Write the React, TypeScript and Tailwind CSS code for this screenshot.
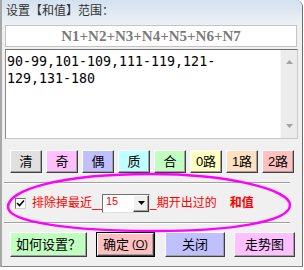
import React from 'react';

const ui = "font-['Liberation_Sans','Noto_Sans_CJK_SC',sans-serif]";

const bevel =
  'border border-t-white border-l-white border-b-[#404040] border-r-[#404040] shadow-[inset_-1px_-1px_0_#a0a0a0]';

const filterButtons = [
  { label: '清', bg: 'bg-[#e0e0e0]' },
  { label: '奇', bg: 'bg-[#ffc0ff]' },
  { label: '偶', bg: 'bg-[#c0c0ff]' },
  { label: '质', bg: 'bg-[#c0ffff]' },
  { label: '合', bg: 'bg-[#c0ffc0]' },
  { label: '0路', bg: 'bg-[#ffffc0]' },
  { label: '1路', bg: 'bg-[#ffe0c0]' },
  { label: '2路', bg: 'bg-[#ffc0c0]' },
];

const Etched: React.FC = () => (
  <div className="h-[2px] border-t border-t-[#a0a0a0] border-b border-b-white" />
);

const Arrow: React.FC<{ up?: boolean; color?: string }> = ({ up, color = '#a3a3a3' }) => (
  <svg width="7" height="4" viewBox="0 0 7 4">
    <path d={up ? 'M0 4 L3.5 0 L7 4 Z' : 'M0 0 L7 0 L3.5 4 Z'} fill={color} />
  </svg>
);

const App: React.FC = () => {
  return (
    <div className={`w-[304px] h-[270px] bg-white ${ui}`}>
      <div className="relative w-[303px] h-[267px] bg-[#f0f0f0] border-l-2 border-l-[#a8a8a8] border-r border-r-[#6d6d6d] border-b border-b-[#8a8a8a] rounded-tr-[7px] overflow-hidden">
        {/* header label */}
        <div className="h-[25px] bg-gradient-to-b from-[#d3e1f0] to-[#eef2f6] pl-[4px] flex items-center">
          <span className="text-[12px] leading-none text-[#333] pb-[4px]">设置【和值】范围：</span>
        </div>

        {/* formula */}
        <div className="ml-[3px] w-[292px] h-[22px] bg-white border border-[#c4c4c4] flex items-center justify-center">
          <span className="font-['Liberation_Serif',serif] font-bold text-[15px] text-[#7a7a7a] leading-none">
            N1+N2+N3+N4+N5+N6+N7
          </span>
        </div>

        {/* range text area */}
        <div className="ml-[3px] mt-[2px] w-[293px] h-[90px] bg-white border border-t-[#707070] border-l-[#8a8a8a] border-r-[#c8c8c8] border-b-[#c8c8c8] flex">
          <div className="flex-1 pl-[1px] pt-[3px] font-['DejaVu_Sans_Mono',monospace] text-[13.3px] leading-[17px] text-black">
            <div>90-99,101-109,111-119,121-</div>
            <div>129,131-180</div>
          </div>
          <div className="w-[17px] bg-[#ececec] border-l border-l-[#f8f8f8] flex flex-col items-center justify-between py-[10px]">
            <Arrow up />
            <Arrow />
          </div>
        </div>

        {/* filter buttons */}
        <div className="mt-[11px] pl-[8px] flex gap-[4px]">
          {filterButtons.map((b) => (
            <div
              key={b.label}
              className={`w-[32px] h-[23px] ${b.bg} ${bevel} flex items-center justify-center text-[13px] text-black leading-none`}
            >
              {b.label}
            </div>
          ))}
        </div>

        {/* exclusion group */}
        <div className="mt-[9px] ml-[2px] w-[286px]">
          <Etched />
          <div className="h-[38px] flex items-center pl-[11px]">
            <div className="w-[11px] h-[11px] bg-white border border-t-[#707070] border-l-[#707070] border-r-[#d0d0d0] border-b-[#d0d0d0] flex items-center justify-center">
              <svg width="9" height="9" viewBox="0 0 9 9">
                <path d="M1 4 L3.5 6.5 L8 1.5" stroke="#000" strokeWidth="1.6" fill="none" />
              </svg>
            </div>
            <span className="ml-[6px] w-[70px] text-[12px] leading-none text-[#ff0000] whitespace-nowrap">排除掉最近__</span>
            <div className="w-[48px] h-[19px] bg-white border border-t-[#707070] border-l-[#707070] border-r-[#e0e0e0] border-b-[#e0e0e0] flex">
              <span className="flex-1 pl-[3px] pt-[1px] text-[11px] leading-none text-[#ff0000]">15</span>
              <div className={`w-[16px] h-[17px] bg-[#f0f0f0] ${bevel} flex items-center justify-center`}>
                <Arrow color="#000" />
              </div>
            </div>
            <span className="text-[12px] leading-none text-[#ff0000] whitespace-nowrap">_期开出过的</span>
            <span className="ml-[13px] text-[12px] leading-none font-bold text-[#ff0000]">和值</span>
          </div>
          <Etched />
        </div>

        {/* action buttons */}
        <div className="mt-[8px] pl-[8px] flex items-center">
          <div className={`w-[77px] h-[25px] bg-[#c0ffc0] ${bevel} flex items-center justify-center text-[13px] leading-none`}>
            如何设置？
          </div>
          <div className="ml-[9px] w-[59px] h-[25px] border border-black">
            <div className={`w-full h-full bg-[#ffc0c0] ${bevel} flex items-center justify-center text-[13px] leading-none`}>
              确定<span className="text-[11px] ml-[3px]">(<span className="underline">O</span>)</span>
            </div>
          </div>
          <div className={`ml-[10px] w-[60px] h-[25px] bg-[#c0c0ff] ${bevel} flex items-center justify-center text-[13px] leading-none`}>
            关闭
          </div>
          <div className={`ml-[9px] w-[61px] h-[25px] bg-[#ffc0ff] ${bevel} flex items-center justify-center text-[13px] leading-none`}>
            走势图
          </div>
        </div>

        {/* hand-drawn highlight around the exclusion option */}
        <svg className="absolute -left-[2px] top-0 pointer-events-none" width="304" height="267" viewBox="0 0 304 267">
          <path
            d="M 8 207 C 8 190, 60 174, 150 174 C 230 174, 290 190, 290 205 C 290 222, 230 231, 155 231 C 70 231, 8 222, 8 207 Z"
            fill="none"
            stroke="#ff00ff"
            strokeWidth="2.5"
          />
        </svg>
      </div>
    </div>
  );
};

export default App;
